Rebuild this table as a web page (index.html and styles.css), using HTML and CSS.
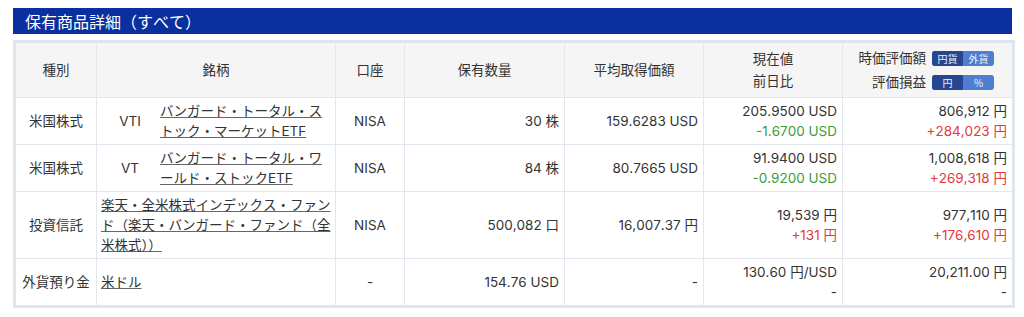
FILE: index.html
```html
<!DOCTYPE html>
<html lang="ja">
<head>
<meta charset="utf-8">
<title>保有商品詳細</title>
<link rel="stylesheet" href="styles.css">
</head>
<body>
<div class="panel">
  <h2 class="panel-title">保有商品詳細（すべて）</h2>
  <table class="holdings">
    <colgroup>
      <col class="c-type"><col class="c-name"><col class="c-acct"><col class="c-qty"><col class="c-avg"><col class="c-price"><col class="c-val">
    </colgroup>
    <thead>
      <tr>
        <th>種別</th>
        <th>銘柄</th>
        <th>口座</th>
        <th>保有数量</th>
        <th>平均取得価額</th>
        <th><div>現在値</div><div>前日比</div></th>
        <th class="th-val">
          <div class="th-line">時価評価額<span class="toggle"><span class="seg on">円貨</span><span class="seg">外貨</span></span></div>
          <div class="th-line">評価損益<span class="toggle"><span class="seg on">円</span><span class="seg">%</span></span></div>
        </th>
      </tr>
    </thead>
    <tbody>
      <tr class="r-2">
        <td class="ctr">米国株式</td>
        <td class="name"><div class="name-wrap"><span class="ticker">VTI</span><a href="#">バンガード・トータル・ストック・マーケットETF</a></div></td>
        <td class="ctr">NISA</td>
        <td class="num">30 株</td>
        <td class="num">159.6283 USD</td>
        <td class="num"><div>205.9500 USD</div><div class="down">-1.6700 USD</div></td>
        <td class="num"><div>806,912 円</div><div class="up">+284,023 円</div></td>
      </tr>
      <tr class="r-2">
        <td class="ctr">米国株式</td>
        <td class="name"><div class="name-wrap"><span class="ticker">VT</span><a href="#">バンガード・トータル・ワールド・ストックETF</a></div></td>
        <td class="ctr">NISA</td>
        <td class="num">84 株</td>
        <td class="num">80.7665 USD</td>
        <td class="num"><div>91.9400 USD</div><div class="down">-0.9200 USD</div></td>
        <td class="num"><div>1,008,618 円</div><div class="up">+269,318 円</div></td>
      </tr>
      <tr class="r-3">
        <td class="ctr">投資信託</td>
        <td class="name"><a href="#">楽天・全米株式インデックス・ファン<br>ド（楽天・バンガード・ファンド（全<br>米株式））</a></td>
        <td class="ctr">NISA</td>
        <td class="num">500,082 口</td>
        <td class="num">16,007.37 円</td>
        <td class="num"><div>19,539 円</div><div class="up">+131 円</div></td>
        <td class="num"><div>977,110 円</div><div class="up">+176,610 円</div></td>
      </tr>
      <tr class="r-2">
        <td class="ctr">外貨預り金</td>
        <td class="name"><a href="#">米ドル</a></td>
        <td class="ctr">-</td>
        <td class="num">154.76 USD</td>
        <td class="num">-</td>
        <td class="num"><div>130.60 円/USD</div><div>-</div></td>
        <td class="num"><div>20,211.00 円</div><div>-</div></td>
      </tr>
    </tbody>
  </table>
</div>
</body>
</html>
```
FILE: styles.css
```css
html, body {
  margin: 0;
  padding: 0;
  background: #ffffff;
}
body {
  padding: 8px 12px 0 13px;
  font-family: "Inter", "Noto Sans CJK JP", sans-serif;
  font-size: 13.5px;
  font-kerning: none;
  color: #333333;
}
.panel-title {
  margin: 0;
  height: 26px;
  line-height: 26px;
  padding-left: 12px;
  background: #0a2f9f;
  color: #ffffff;
  font-family: "Noto Sans CJK JP", sans-serif;
  font-size: 16px;
  font-weight: normal;
}
.holdings {
  margin-top: 6px;
  width: 999px;
  table-layout: fixed;
  border-collapse: collapse;
  border: 3px solid #dfe5ec;
}
.c-type { width: 82px; }
.c-name { width: 239px; }
.c-acct { width: 69px; }
.c-qty { width: 160px; }
.c-avg { width: 139px; }
.c-price { width: 139px; }
.c-val { width: 171px; }

.holdings th,
.holdings td {
  border: 1px solid #e2e7ed;
  padding: 3px 5px;
  line-height: 20px;
  vertical-align: middle;
}
.holdings th {
  background: #f5f5f5;
  font-weight: normal;
  text-align: center;
  height: 47px;
  line-height: 22px;
}
.holdings th.th-val {
  text-align: right;
  padding-right: 18px;
}
.th-line {
  display: flex;
  justify-content: flex-end;
  align-items: center;
  height: 24px;
}
.toggle {
  display: inline-flex;
  margin-left: 6px;
  width: 62px;
  height: 15px;
  border-radius: 3px;
  overflow: hidden;
  background: #4f7ed0;
}
.seg {
  flex: 1;
  display: flex;
  align-items: center;
  justify-content: center;
  color: #eef2fb;
  font-family: "Noto Sans CJK JP", sans-serif;
  font-size: 10px;
  font-weight: normal;
  line-height: 15px;
}
.seg.on {
  background: #26468f;
}
.r-2 td { height: 40px; }
.r-3 td { height: 60px; }
.ctr { text-align: center; }
.num { text-align: right; }
.holdings td.name { padding-left: 4px; padding-right: 2px; }
.name-wrap {
  display: flex;
  align-items: center;
}
.ticker {
  flex: 0 0 58px;
  text-align: center;
}
.name a {
  color: #333333;
  text-decoration: underline;
  text-decoration-color: #666666;
}
.name-wrap a { margin-left: 1px; }
.down { color: #3a9d3a; }
.up { color: #e3393c; }
```
